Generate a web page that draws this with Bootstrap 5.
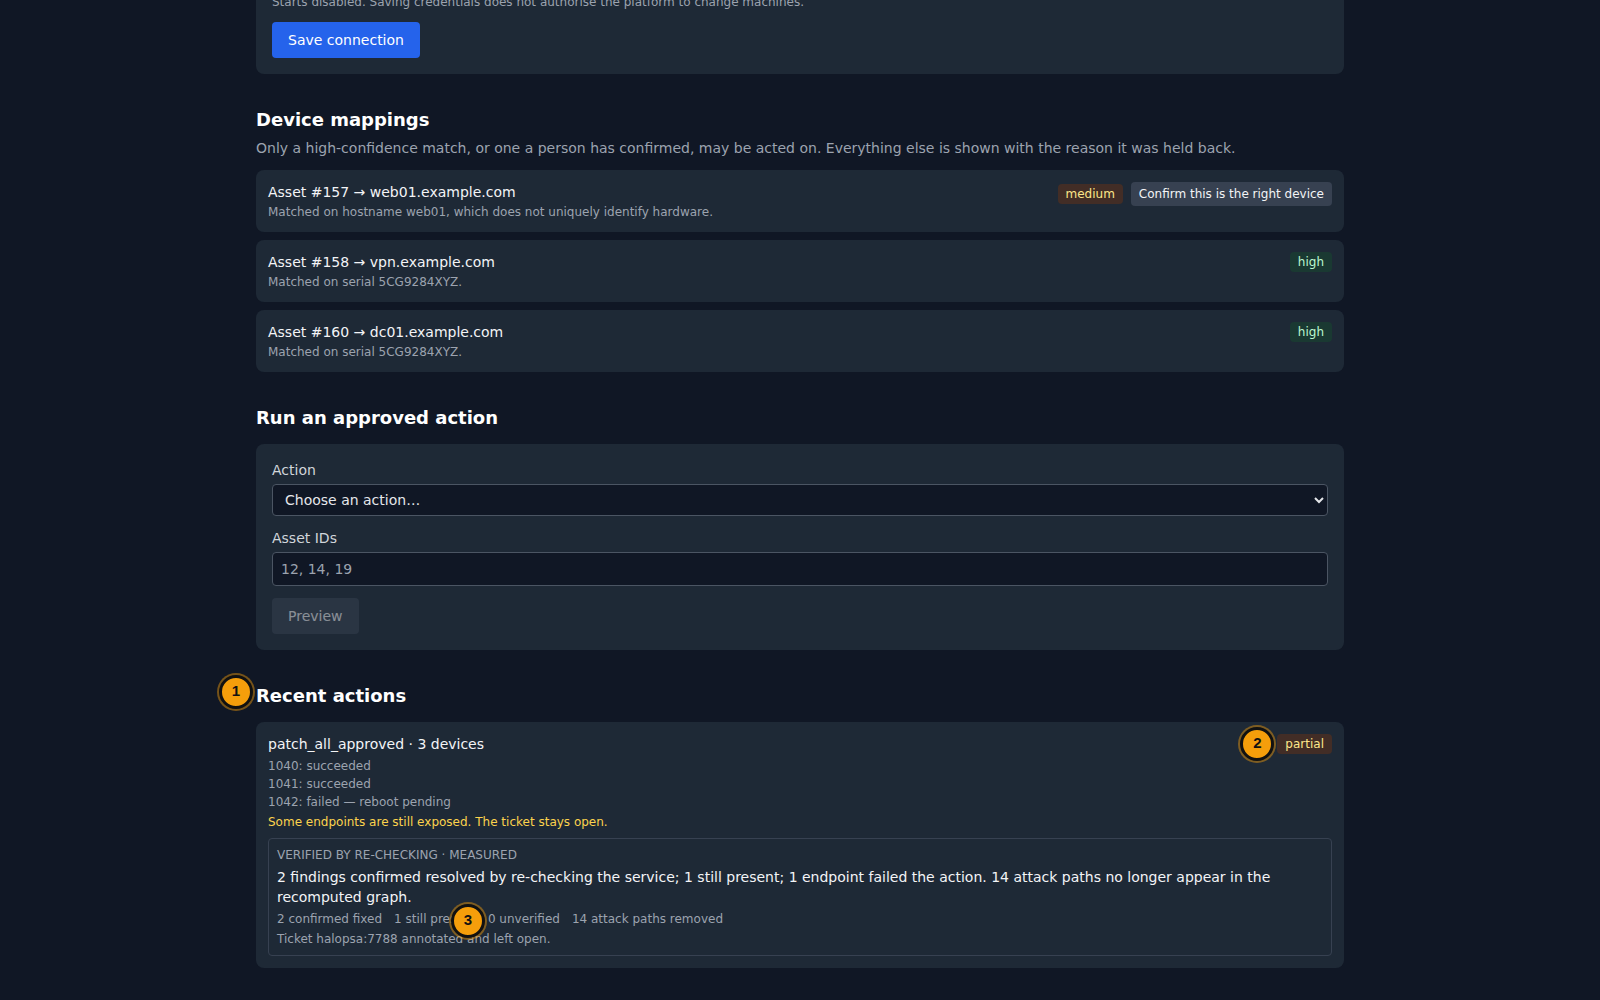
<!DOCTYPE html>
<html lang="en">
<head>
<meta charset="utf-8">
<meta name="viewport" content="width=device-width, initial-scale=1">
<title>Endpoint management</title>
<link href="https://cdn.jsdelivr.net/npm/bootstrap@5.3.0/dist/css/bootstrap.min.css" rel="stylesheet">
<style>
  :root { --ink: #101725; --panel: #1e2936; --line: #374151; --line-strong: #4b5563; --muted: #9ca3af; --soft: #d1d5db; --bright: #f3f4f6; }
  body { background: var(--ink); color: var(--bright); font: 14px/20px "DejaVu Sans", sans-serif; overflow-x: hidden; }
  .page { max-width: 1152px; padding: 0 32px 32px; }
  .page section { margin-top: 32px; }
  h2 { font-size: 18px; line-height: 28px; font-weight: 700; margin: 0; color: #fff; }
  .panel { background: var(--panel); border-radius: 8px; }
  .panel-form { padding: 16px; }
  .panel-row { padding: 12px; }
  .panel-scrolled { margin-top: -22px; }
  .stack-12 { display: flex; flex-direction: column; gap: 12px; }
  .fine { font-size: 12px; line-height: 16px; }
  .sub { margin-top: 2px; }
  .dim { color: var(--muted); }
  .warn { color: #fcd34d; }
  .btn { --bs-btn-font-size: 14px; --bs-btn-line-height: 20px; --bs-btn-padding-y: 8px; --bs-btn-padding-x: 16px; --bs-btn-border-radius: 4px; --bs-btn-border-width: 0; }
  .btn-save { --bs-btn-bg: #2563eb; --bs-btn-color: #fff; --bs-btn-hover-bg: #1d4ed8; --bs-btn-hover-color: #fff; }
  .btn-quiet { --bs-btn-bg: #374151; --bs-btn-color: #f3f4f6; --bs-btn-hover-bg: #4b5563; --bs-btn-hover-color: #fff; --bs-btn-disabled-bg: #374151; --bs-btn-disabled-color: #f3f4f6; --bs-btn-disabled-opacity: .5; }
  .btn-tiny { --bs-btn-font-size: 12px; --bs-btn-line-height: 16px; --bs-btn-padding-y: 4px; --bs-btn-padding-x: 8px; }
  .tag { display: inline-block; position: relative; font-size: 12px; line-height: 16px; padding: 2px 8px; border-radius: 4px; }
  .tag-amber { background: rgba(120, 53, 15, .4); color: #fde68a; }
  .tag-green { background: rgba(20, 83, 45, .4); color: #bbf7d0; }
  .field-label { display: block; color: var(--soft); margin-bottom: 4px; }
  .field { display: block; width: 100%; background: var(--ink); color: #e5e7eb; border: 1px solid var(--line-strong); border-radius: 4px; padding: 6px 8px; font-size: 14px; line-height: 20px; }
  select.field { height: 32px; }
  .field::placeholder { color: var(--muted); opacity: 1; }
  .log li + li { margin-top: 2px; }
  .proof { border: 1px solid var(--line); border-radius: 4px; padding: 8px; margin-top: 8px; }
  .caption-caps { text-transform: uppercase; }
  .counts { gap: 0 12px; }
  .pin { position: absolute; left: -37px; top: -7px; z-index: 2; width: 34px; height: 34px; border-radius: 50%; border: 3px solid #111; background: #f59e0b; box-shadow: 0 0 0 2px rgba(245, 158, 11, .45); color: #111; font: bold 15px/26px "Liberation Sans", sans-serif; text-align: center; }
</style>
<script src="https://cdn.jsdelivr.net/npm/bootstrap@5.3.0/dist/js/bootstrap.bundle.min.js" defer></script>
</head>
<body>
<main class="page mx-auto">
  <form class="panel panel-form panel-scrolled stack-12 align-items-start">
    <div class="fine dim">Starts disabled. Saving credentials does not authorise the platform to change machines.</div>
    <button type="button" class="btn btn-save">Save connection</button>
  </form>

  <section>
    <h2>Device mappings</h2>
    <p class="dim mt-1 mb-0">Only a high-confidence match, or one a person has confirmed, may be acted on. Everything else is shown with the reason it was held back.</p>
    <ul class="list-unstyled d-flex flex-column gap-2 mb-0 pt-1 mt-2">
      <li class="panel panel-row d-flex justify-content-between align-items-start">
        <div>
          <div>Asset #157 → web01.example.com</div>
          <div class="fine dim sub">Matched on hostname web01, which does not uniquely identify hardware.</div>
        </div>
        <div class="d-flex align-items-center gap-2">
          <span class="tag tag-amber">medium</span>
          <button type="button" class="btn btn-quiet btn-tiny">Confirm this is the right device</button>
        </div>
      </li>
      <li class="panel panel-row d-flex justify-content-between align-items-start">
        <div>
          <div>Asset #158 → vpn.example.com</div>
          <div class="fine dim sub">Matched on serial 5CG9284XYZ.</div>
        </div>
        <span class="tag tag-green">high</span>
      </li>
      <li class="panel panel-row d-flex justify-content-between align-items-start">
        <div>
          <div>Asset #160 → dc01.example.com</div>
          <div class="fine dim sub">Matched on serial 5CG9284XYZ.</div>
        </div>
        <span class="tag tag-green">high</span>
      </li>
    </ul>
  </section>

  <section class="stack-12">
    <h2>Run an approved action</h2>
    <form class="panel panel-form stack-12">
      <div>
        <label class="field-label" for="action">Action</label>
        <select class="field" id="action"><option>Choose an action…</option></select>
      </div>
      <div>
        <label class="field-label" for="assets">Asset IDs</label>
        <input class="field" id="assets" type="text" placeholder="12, 14, 19">
      </div>
      <button type="button" class="btn btn-quiet align-self-start" disabled>Preview</button>
    </form>
  </section>

  <section class="stack-12">
    <h2 class="position-relative">Recent actions<span class="pin">1</span></h2>
    <article class="panel panel-row">
      <div class="d-flex justify-content-between align-items-start">
        <div>patch_all_approved · 3 devices</div>
        <span class="tag tag-amber">partial<span class="pin">2</span></span>
      </div>
      <ul class="log list-unstyled fine dim mt-1 mb-0">
        <li>1040: succeeded</li>
        <li>1041: succeeded</li>
        <li>1042: failed — reboot pending</li>
      </ul>
      <div class="fine warn mt-1">Some endpoints are still exposed. The ticket stays open.</div>
      <div class="proof">
        <div class="fine dim caption-caps">Verified by re-checking · measured</div>
        <p class="mt-1 mb-0">2 findings confirmed resolved by re-checking the service; 1 still present; 1 endpoint failed the action. 14 attack paths no longer appear in the recomputed graph.</p>
        <div class="counts d-flex flex-wrap fine dim mt-1">
          <span>2 confirmed fixed</span>
          <span>1 still present</span>
          <span class="position-relative">0 unverified<span class="pin">3</span></span>
          <span>14 attack paths removed</span>
        </div>
        <div class="fine dim mt-1">Ticket halopsa:7788 annotated and left open.</div>
      </div>
    </article>
  </section>
</main>
</body>
</html>
